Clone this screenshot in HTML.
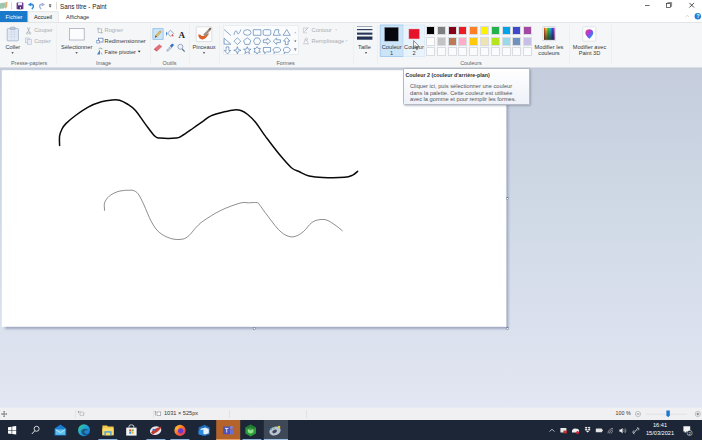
<!DOCTYPE html>
<html lang="fr">
<head>
<meta charset="utf-8">
<title>Sans titre - Paint</title>
<style>
html,body{margin:0;padding:0;}
body{width:702px;height:440px;overflow:hidden;position:relative;background:#d7dfeb linear-gradient(#c5cddd 0%,#d0dae6 45%,#e3e6f3 100%) no-repeat 0 67px / 702px 341px;font-family:"Liberation Sans",sans-serif;font-size:5.65px;color:#3a3a3a;}
.abs{position:absolute;}
.t{position:absolute;white-space:nowrap;line-height:7px;height:7px;}
.c{text-align:center;}
.dis{color:#a9adb3;}
#titlebar{left:0;top:0;width:702px;height:22px;background:#fff;}
#ribbon{left:0;top:22px;width:702px;height:45px;background:#f5f6f7;border-top:1px solid #e3e5e8;box-sizing:border-box;}
#ribbonedge{left:0;top:66px;width:702px;height:4px;background:linear-gradient(#f5f6f7 0%,#f5f6f7 28%,#c2c9d6 46%,#c6cedc 100%);}
.sep{position:absolute;top:25px;width:1px;height:39px;background:#eeeff1;}
.glabel{position:absolute;top:59.5px;white-space:nowrap;line-height:7px;color:#61656b;font-size:5.4px;}
#canvas{left:2px;top:70px;width:505px;height:257px;background:#fff;box-shadow:2px 2px 2px rgba(120,135,165,.55);}
#status{left:0;top:408px;width:702px;height:12px;background:#f0f0f2;box-shadow:0 -1px 0 #e8eaf3;}
#taskbar{left:0;top:420px;width:702px;height:20px;background:#1c2636;}
.ssep{position:absolute;top:2px;width:1px;height:8px;background:#e1e3e7;}
.sw{position:absolute;width:9px;height:9px;box-sizing:border-box;border:1px solid #d9dce0;}
.tip{left:402.5px;top:67.8px;width:127px;height:37px;box-sizing:border-box;background:linear-gradient(#ffffff,#eef1f8);border:1px solid #b4b9c4;border-radius:1.5px;box-shadow:1px 1px 2px rgba(90,100,120,.4);}
</style>
</head>
<body>

<!-- ======= title bar + tabs ======= -->
<div id="titlebar" class="abs"></div>
<div class="t" style="left:60px;top:2.5px;font-size:6.3px;color:#222;">Sans titre - Paint</div>
<svg class="abs" style="left:0;top:0" width="702" height="22" viewBox="0 0 702 22">
  <!-- app icon (cut off at left) -->
  <path d="M0 3.2 L4.5 2.6 L6 5.5 L4 8.6 L0 8.8Z" fill="#9fc7b0"/>
  <path d="M5.2 2.2 L7.6 1.8 L7.2 6.5 L6 8.6 L5 8.2Z" fill="#e4b27a"/>
  <rect x="11.3" y="2" width="0.7" height="7.5" fill="#c9c9c9"/>
  <!-- save -->
  <rect x="16.6" y="2.6" width="6.8" height="6.6" rx="0.5" fill="#6a3f8f"/>
  <rect x="18" y="2.6" width="4" height="2.6" fill="#efe6f6"/>
  <rect x="18.2" y="6.4" width="3.6" height="2.8" fill="#3f2460"/>
  <rect x="19.8" y="6.9" width="1.2" height="1.8" fill="#e9def3"/>
  <!-- undo -->
  <path d="M30.4 4.4 C33.2 3.6 34.6 6.4 32.2 8.6" fill="none" stroke="#2b8ad8" stroke-width="1.5" stroke-linecap="round"/>
  <path d="M27.8 4.8 L31.2 2.4 L31.4 6.6Z" fill="#2b8ad8"/>
  <!-- redo -->
  <path d="M42.6 4.4 C39.8 3.6 38.4 6.4 40.8 8.6" fill="none" stroke="#a9b6d2" stroke-width="1.5" stroke-linecap="round"/>
  <path d="M45.2 4.8 L41.8 2.4 L41.6 6.6Z" fill="#a9b6d2"/>
  <!-- dropdown -->
  <rect x="48.9" y="4" width="2.4" height="0.6" fill="#444"/>
  <path d="M48.8 5.4 L51.4 5.4 L50.1 7.4Z" fill="#333"/>
  <rect x="56.3" y="2" width="0.7" height="7.5" fill="#c9c9c9"/>
  <!-- window controls -->
  <rect x="645" y="5" width="4.6" height="0.7" fill="#333"/>
  <rect x="666.6" y="3.6" width="3.8" height="3.8" fill="none" stroke="#333" stroke-width="0.7"/>
  <path d="M667.8 3.4 V2.6 H671.6 V6.4 H670.8" fill="none" stroke="#333" stroke-width="0.6"/>
  <path d="M689.4 2.9 L694 7.5 M694 2.9 L689.4 7.5" stroke="#222" stroke-width="0.8" fill="none"/>
  <!-- tabs -->
  <rect x="0" y="11" width="27.6" height="11" fill="#1979ca"/>
  <path d="M28.3 22 V11.6 H58.3 V22" fill="#f5f6f7" stroke="#dadbdc" stroke-width="0.6"/>
  <!-- collapse + help -->
  <path d="M685.8 17 L687.4 15.2 L689 17" fill="none" stroke="#c4c4c4" stroke-width="0.6"/>
  <circle cx="697.8" cy="16.2" r="3.2" fill="#1f7fd6"/>
</svg>
<div class="t" style="left:5.6px;top:13.6px;font-size:5.6px;color:#fff;">Fichier</div>
<div class="t" style="left:34px;top:13.6px;font-size:5.6px;color:#222;">Accueil</div>
<div class="t" style="left:66px;top:13.6px;font-size:5.6px;color:#333;">Affichage</div>
<div class="t" style="left:696.6px;top:12.9px;font-size:5px;color:#fff;font-weight:bold;">?</div>

<!-- ======= ribbon ======= -->
<div id="ribbon" class="abs"></div>
<div id="ribbonedge" class="abs"></div>
<!-- group separators -->
<div class="sep" style="left:55.5px"></div>
<div class="sep" style="left:149.5px"></div>
<div class="sep" style="left:189px"></div>
<div class="sep" style="left:218.5px"></div>
<div class="sep" style="left:352.5px"></div>
<div class="sep" style="left:376.5px"></div>
<div class="sep" style="left:568.5px"></div>
<div class="sep" style="left:611px"></div>

<!-- Presse-papiers -->
<svg class="abs" style="left:0;top:22px" width="702" height="45" viewBox="0 22 702 45">
  <!-- coller icon -->
  <rect x="7.2" y="28.6" width="11.2" height="12.2" rx="0.6" fill="#e4ebf5" stroke="#9fb1cd" stroke-width="0.8"/>
  <rect x="10.4" y="27.2" width="4.8" height="2.4" rx="0.5" fill="#bfc9da" stroke="#8796b0" stroke-width="0.5"/>
  <path d="M8.6 32 H17 M8.6 34.4 H17 M8.6 36.8 H17 M11.4 30.2 V40 M14.4 30.2 V40" stroke="#c6d2e6" stroke-width="0.5"/>
  <path d="M11.4 52.2 H13.8 L12.6 53.8Z" fill="#333"/>
  <!-- couper icon -->
  <path d="M27.4 27.4 L29.8 33 M29.8 27.4 L27.4 33" stroke="#a7adb8" stroke-width="0.8" fill="none"/>
  <circle cx="27.2" cy="33.4" r="0.9" fill="none" stroke="#a7adb8" stroke-width="0.6"/>
  <circle cx="30" cy="33.4" r="0.9" fill="none" stroke="#a7adb8" stroke-width="0.6"/>
  <!-- copier icon -->
  <rect x="25.6" y="38" width="3.8" height="4.8" fill="#e9eef6" stroke="#b3bdd0" stroke-width="0.6"/>
  <rect x="27.6" y="39.6" width="3.8" height="4.8" fill="#e9eef6" stroke="#b3bdd0" stroke-width="0.6"/>
  <!-- selectionner icon -->
  <rect x="69.6" y="28.6" width="14.6" height="11.4" fill="#fbfcfe" stroke="#9aa3b4" stroke-width="0.7"/>
  <path d="M75.4 52.2 H77.8 L76.6 53.8Z" fill="#333"/>
  <!-- rogner icon -->
  <path d="M98.2 27.6 V32.6 H102.8 M97 28.8 H101.6 V33.6" stroke="#a7adb8" stroke-width="0.7" fill="none"/>
  <!-- redimensionner icon -->
  <rect x="98.4" y="38.2" width="4.6" height="3.8" fill="#fff" stroke="#4f78b8" stroke-width="0.7"/>
  <rect x="96.8" y="40.6" width="2.6" height="2.4" fill="#fff" stroke="#4f78b8" stroke-width="0.6"/>
  <!-- faire pivoter icon -->
  <path d="M97 54.6 L100 49.6 L100 54.6Z" fill="#4f86c6"/>
  <path d="M100.8 54.6 L103 54.6 L100.8 51Z" fill="#b9c8de"/>
  <path d="M98.6 49 C100 47.6 101.8 48 102.6 49.4" stroke="#3a8a5a" stroke-width="0.6" fill="none"/>
  <path d="M137.9 50.8 H140.5 L139.2 52.5Z" fill="#222"/>

  <!-- outils -->
  <rect x="152.9" y="28.7" width="10.2" height="10.6" fill="#cce4f7" stroke="#7fb4e4" stroke-width="0.7"/>
  <path d="M155 37.6 L155.6 35.6 L160 30.6 L161.4 31.8 L157 36.8Z" fill="#e8c15a" stroke="#8a7a4a" stroke-width="0.4"/>
  <path d="M155 37.6 L155.6 35.6 L157 36.8Z" fill="#444"/>
  <!-- fill bucket -->
  <path d="M167.6 33 L170.6 30.2 L173.6 33.4 L170.4 36.4Z" fill="#eef2f8" stroke="#6f7f9a" stroke-width="0.6"/>
  <path d="M166.6 31.6 C165.6 33 165.8 35 166.8 35.8 C167.4 34.6 167.4 33 166.6 31.6Z" fill="#3d8fd8"/>
  <path d="M172.6 34 L173.8 36 L171.8 36.6Z" fill="#d0503a"/>
  <!-- eraser -->
  <path d="M154.6 48.6 L159.2 44.6 L162 46.6 L157.4 50.8Z" fill="#e0707a" stroke="#c45a66" stroke-width="0.3"/>
  <path d="M154.6 48.6 L157.4 50.8 L156.8 51.6 L154 49.4Z" fill="#b9485a"/>
  <!-- picker -->
  <path d="M166.8 51.2 L167.4 49.4 L170.4 46.2 L171.8 47.4 L168.8 50.6Z" fill="#cfd6e4" stroke="#5c6d8e" stroke-width="0.4"/>
  <path d="M170 45.8 L172 43.8 C173 43.2 174.2 44.4 173.6 45.4 L171.8 47.6Z" fill="#2f6fc0"/>
  <!-- magnifier -->
  <circle cx="180.4" cy="46.8" r="2.5" fill="#eaf2fb" stroke="#7a8aa6" stroke-width="0.7"/>
  <path d="M182.2 48.8 L184.6 51.6" stroke="#5a6a86" stroke-width="1.1"/>

  <!-- pinceaux -->
  <rect x="196.2" y="26.8" width="15.6" height="14.8" rx="0.8" fill="#fdfdfd" stroke="#c9ccd2" stroke-width="0.6"/>
  <path d="M198.4 34.6 C198 38.6 201.4 40.4 204.6 38.8 C207.4 37.4 207.2 35.2 209.6 33.6 C206.6 33.6 205.4 35.6 203.4 36 C201 36.4 200.6 33.6 198.4 34.6Z" fill="#d9622b"/>
  <path d="M203.2 34.6 L209.2 28.4 L210.8 29.8 L205.2 36.4Z" fill="#9c8f84"/>
  <path d="M208.4 29.2 L210.2 27.6 L211.4 28.8 L210 30.6Z" fill="#6d5f57"/>
  <path d="M202.8 52.2 H205.2 L204 53.8Z" fill="#333"/>
</svg>
<div class="t c" style="left:0px;width:25.6px;top:43.8px;">Coller</div>
<div class="t dis" style="left:34.2px;top:26.6px;">Couper</div>
<div class="t dis" style="left:34.2px;top:37.6px;">Copier</div>
<div class="glabel" style="left:11px;">Presse-papiers</div>
<div class="t c" style="left:56.6px;width:40px;top:43.8px;">Sélectionner</div>
<div class="t dis" style="left:104.6px;top:26.6px;">Rogner</div>
<div class="t" style="left:104.6px;top:37.6px;">Redimensionner</div>
<div class="t" style="left:104.6px;top:48.6px;">Faire pivoter</div>
<div class="glabel" style="left:96px;">Image</div>
<div class="t" style="left:178.6px;top:31px;font-family:'Liberation Serif',serif;font-weight:bold;font-size:9px;color:#222;line-height:9px;height:9px;">A</div>
<div class="glabel" style="left:162.6px;">Outils</div>
<div class="t c" style="left:189px;width:30px;top:43.8px;">Pinceaux</div>

<!-- Formes -->
<div class="abs" style="left:222.7px;top:24.6px;width:76.6px;height:30.8px;background:#fafbfd;border:1px solid #eaedf1;box-sizing:border-box;"></div>
<svg class="abs" style="left:0;top:22px" width="702" height="45" viewBox="0 22 702 45">
<path transform="translate(227.50 32.50)" d="M-3.4 -3 L3.4 3" fill="none" stroke="#3f70a8" stroke-width="0.6" stroke-linejoin="round"/>
<path transform="translate(237.37 32.50)" d="M-3.4 2.6 C-2.4 -3 -0.6 -2.6 -0.2 0.4 C0.2 2.6 2.4 1 3.4 -3" fill="none" stroke="#3f70a8" stroke-width="0.6" stroke-linejoin="round"/>
<ellipse cx="247.24" cy="32.5" rx="3.8" ry="2.8" fill="none" stroke="#3f70a8" stroke-width="0.6" stroke-linejoin="round"/>
<rect x="253.31" y="29.7" width="7.6" height="5.6" fill="none" stroke="#3f70a8" stroke-width="0.6" stroke-linejoin="round"/>
<rect x="263.18" y="29.7" width="7.6" height="5.6" rx="1.4" fill="none" stroke="#3f70a8" stroke-width="0.6" stroke-linejoin="round"/>
<path transform="translate(276.85 32.50)" d="M-3.6 2.8 L-1.6 -2.8 L2 -2.8 L1.6 0.4 L3.8 2.8Z" fill="none" stroke="#3f70a8" stroke-width="0.6" stroke-linejoin="round"/>
<path transform="translate(286.72 32.50)" d="M-3.6 2.8 L0 -3 L3.6 2.8Z" fill="none" stroke="#3f70a8" stroke-width="0.6" stroke-linejoin="round"/>
<path transform="translate(227.50 41.20)" d="M-3.4 3 L-3.4 -3 L3.4 3Z" fill="none" stroke="#3f70a8" stroke-width="0.6" stroke-linejoin="round"/>
<path transform="translate(237.37 41.20)" d="M0 -3.4 L3.4 0 L0 3.4 L-3.4 0Z" fill="none" stroke="#3f70a8" stroke-width="0.6" stroke-linejoin="round"/>
<path transform="translate(247.24 41.20)" d="M0 -3.4 L3.6 -0.6 L2.2 3.2 L-2.2 3.2 L-3.6 -0.6Z" fill="none" stroke="#3f70a8" stroke-width="0.6" stroke-linejoin="round"/>
<path transform="translate(257.11 41.20)" d="M-1.8 -3.2 L1.8 -3.2 L3.6 0 L1.8 3.2 L-1.8 3.2 L-3.6 0Z" fill="none" stroke="#3f70a8" stroke-width="0.6" stroke-linejoin="round"/>
<path transform="translate(266.98 41.20)" d="M-3.6 -1.4 L0.2 -1.4 L0.2 -3.2 L3.6 0 L0.2 3.2 L0.2 1.4 L-3.6 1.4Z" fill="none" stroke="#3f70a8" stroke-width="0.6" stroke-linejoin="round"/>
<path transform="translate(276.85 41.20)" d="M3.6 -1.4 L-0.2 -1.4 L-0.2 -3.2 L-3.6 0 L-0.2 3.2 L-0.2 1.4 L3.6 1.4Z" fill="none" stroke="#3f70a8" stroke-width="0.6" stroke-linejoin="round"/>
<path transform="translate(286.72 41.20)" d="M-1.4 3.4 L-1.4 -0.2 L-3.2 -0.2 L0 -3.6 L3.2 -0.2 L1.4 -0.2 L1.4 3.4Z" fill="none" stroke="#3f70a8" stroke-width="0.6" stroke-linejoin="round"/>
<path transform="translate(227.50 50.30)" d="M-1.4 -3.4 L-1.4 0.2 L-3.2 0.2 L0 3.6 L3.2 0.2 L1.4 0.2 L1.4 -3.4Z" fill="none" stroke="#3f70a8" stroke-width="0.6" stroke-linejoin="round"/>
<path transform="translate(237.37 50.30)" d="M0 -3.6 L0.9 -0.9 L3.6 0 L0.9 0.9 L0 3.6 L-0.9 0.9 L-3.6 0 L-0.9 -0.9Z" fill="none" stroke="#3f70a8" stroke-width="0.6" stroke-linejoin="round"/>
<path transform="translate(247.24 50.30)" d="M0 -3.6 L1 -1.1 L3.7 -1.1 L1.6 0.6 L2.4 3.3 L0 1.7 L-2.4 3.3 L-1.6 0.6 L-3.7 -1.1 L-1 -1.1Z" fill="none" stroke="#3f70a8" stroke-width="0.6" stroke-linejoin="round"/>
<path transform="translate(257.11 50.30)" d="M0 -3.7 L1.1 -1.9 L3.2 -1.9 L2.2 0 L3.2 1.9 L1.1 1.9 L0 3.7 L-1.1 1.9 L-3.2 1.9 L-2.2 0 L-3.2 -1.9 L-1.1 -1.9Z" fill="none" stroke="#3f70a8" stroke-width="0.6" stroke-linejoin="round"/>
<path transform="translate(266.98 50.30)" d="M-3.6 -2.8 H3.6 V1.6 H-0.6 L-2.2 3.4 L-2.2 1.6 H-3.6Z" fill="none" stroke="#3f70a8" stroke-width="0.6" stroke-linejoin="round"/>
<path transform="translate(276.85 50.30)" d="M0 -2.8 C2.2 -2.8 3.8 -1.8 3.8 -0.4 C3.8 1 2.2 2 0 2 C-0.6 2 -1 1.9 -1.4 1.8 L-3 3.2 L-2.6 1.2 C-3.4 0.8 -3.8 0.2 -3.8 -0.4 C-3.8 -1.8 -2.2 -2.8 0 -2.8Z" fill="none" stroke="#3f70a8" stroke-width="0.6" stroke-linejoin="round"/>
<path transform="translate(286.72 50.30)" d="M-2 -2.6 C-0.8 -3.4 1.4 -3.2 2.4 -2.2 C3.8 -1.6 3.8 0.2 2.8 1 C2.2 2.4 0.2 2.6 -0.8 2 L-2.8 3.2 L-2.2 1.6 C-3.8 0.8 -3.8 -1.6 -2 -2.6Z" fill="none" stroke="#3f70a8" stroke-width="0.6" stroke-linejoin="round"/>
  <path d="M294.2 33.2 H296.4 L295.3 31.8Z" fill="#b4b8be"/>
  <path d="M294.2 40.6 H296.4 L295.3 42Z" fill="#444"/>
  <rect x="294.2" y="48.2" width="2.2" height="0.5" fill="#444"/>
  <path d="M294.2 49.4 H296.4 L295.3 50.8Z" fill="#444"/>
  <!-- contour icon -->
  <path d="M303.4 28 H307.4 M303.4 28 V32.8 H307" stroke="#b4bac6" stroke-width="0.6" fill="none"/>
  <path d="M304.6 31.6 L308.4 27.4" stroke="#b4bac6" stroke-width="0.9" fill="none"/>
  <path d="M335.2 29.4 H337.2 L336.2 30.6Z" fill="#b4b8be"/>
  <!-- remplissage icon -->
  <path d="M303 43.8 H309 M304 42.6 L305.4 39.2 L307.2 41 L308 42.6" stroke="#b4bac6" stroke-width="0.7" fill="none"/>
  <circle cx="306.4" cy="39.2" r="1.2" fill="none" stroke="#b4bac6" stroke-width="0.6"/>
  <path d="M345.6 40.4 H347.6 L346.6 41.6Z" fill="#b4b8be"/>
  <!-- taille -->
  <rect x="357" y="26.2" width="15.4" height="0.7" fill="#7d8799"/>
  <rect x="357" y="29" width="15.4" height="1.2" fill="#2f4060"/>
  <rect x="357" y="32.6" width="15.4" height="2.1" fill="#273858"/>
  <rect x="357" y="36.5" width="15.4" height="3.2" fill="#1f3050"/>
  <path d="M364.8 52.2 H367.2 L366 53.8Z" fill="#333"/>
  <!-- couleur 1 / 2 -->
  <rect x="380.2" y="25" width="23" height="31.4" fill="#cce4f7" stroke="#92c0e8" stroke-width="0.7"/>
  <rect x="403.2" y="25" width="21.6" height="31.4" fill="#e9f3fc" stroke="#cfe3f6" stroke-width="0.6"/>
  <rect x="384.6" y="27.3" width="13.8" height="13.8" fill="#05070c" stroke="#8f99aa" stroke-width="0.4"/>
  <rect x="408.9" y="29" width="10.5" height="9.9" fill="#e5142a" stroke="#e9a0a8" stroke-width="0.4"/>
  <!-- cursor -->
  <path d="M413.6 40.6 V48.6 L415.4 46.9 L416.7 49.8 L417.7 49.3 L416.5 46.5 L419 46.3Z" fill="#fff" stroke="#222" stroke-width="0.5" stroke-linejoin="round"/>
  <!-- modifier les couleurs -->
  <defs>
    <linearGradient id="rb" x1="0" x2="1" y1="0" y2="0">
      <stop offset="0" stop-color="#e63a2e"/><stop offset="0.2" stop-color="#f0d23a"/><stop offset="0.4" stop-color="#3cc24a"/><stop offset="0.6" stop-color="#2fb6e0"/><stop offset="0.8" stop-color="#3a4fd0"/><stop offset="1" stop-color="#c03ac8"/>
    </linearGradient>
    <linearGradient id="dk" x1="0" x2="0" y1="0" y2="1">
      <stop offset="0" stop-color="#000" stop-opacity="0"/><stop offset="1" stop-color="#222" stop-opacity="0.75"/>
    </linearGradient>
    <linearGradient id="p3" x1="0" x2="1" y1="0" y2="1">
      <stop offset="0" stop-color="#f03a7a"/><stop offset="0.45" stop-color="#a040e0"/><stop offset="0.75" stop-color="#2a8af0"/><stop offset="1" stop-color="#20c0e0"/>
    </linearGradient>
  </defs>
  <rect x="543" y="26.8" width="12.6" height="14" fill="#fff" stroke="#b9bec8" stroke-width="0.5"/>
  <rect x="544" y="27.8" width="10.6" height="12" fill="url(#rb)"/>
  <rect x="544" y="27.8" width="10.6" height="12" fill="url(#dk)"/>
  <!-- paint 3d -->
  <rect x="582.8" y="26.8" width="13" height="14.4" rx="0.8" fill="#fdfdfd" stroke="#d2d5da" stroke-width="0.6"/>
  <path d="M589.3 38.8 C585.6 35.4 585 33.4 585.6 31.4 C586.6 28.6 592 28.6 593 31.4 C593.6 33.4 593 35.4 589.3 38.8Z" fill="url(#p3)"/>
</svg>
<div class="t dis" style="left:311.6px;top:26.6px;">Contour</div>
<div class="t dis" style="left:311.6px;top:37.6px;">Remplissage</div>
<div class="glabel" style="left:276.4px;">Formes</div>
<div class="t c" style="left:352.5px;width:24px;top:43.8px;">Taille</div>
<div class="t c" style="left:380.2px;width:23px;top:43.9px;">Couleur</div>
<div class="t c" style="left:380.2px;width:23px;top:49.6px;">1</div>
<div class="t c" style="left:403.2px;width:21.6px;top:43.9px;">Couleur</div>
<div class="t c" style="left:403.2px;width:21.6px;top:49.6px;">2</div>
<div class="sw" style="left:426.20px;top:26px;background:#000000;"></div>
<div class="sw" style="left:426.20px;top:36.6px;background:#ffffff;"></div>
<div class="sw" style="left:426.20px;top:47.3px;background:#fafbfc;"></div>
<div class="sw" style="left:436.96px;top:26px;background:#7f7f7f;"></div>
<div class="sw" style="left:436.96px;top:36.6px;background:#c3c3c3;"></div>
<div class="sw" style="left:436.96px;top:47.3px;background:#fafbfc;"></div>
<div class="sw" style="left:447.72px;top:26px;background:#880015;"></div>
<div class="sw" style="left:447.72px;top:36.6px;background:#b97a57;"></div>
<div class="sw" style="left:447.72px;top:47.3px;background:#fafbfc;"></div>
<div class="sw" style="left:458.48px;top:26px;background:#ed1c24;"></div>
<div class="sw" style="left:458.48px;top:36.6px;background:#ffaec9;"></div>
<div class="sw" style="left:458.48px;top:47.3px;background:#fafbfc;"></div>
<div class="sw" style="left:469.24px;top:26px;background:#ff7f27;"></div>
<div class="sw" style="left:469.24px;top:36.6px;background:#ffc90e;"></div>
<div class="sw" style="left:469.24px;top:47.3px;background:#fafbfc;"></div>
<div class="sw" style="left:480.00px;top:26px;background:#fff200;"></div>
<div class="sw" style="left:480.00px;top:36.6px;background:#efe4b0;"></div>
<div class="sw" style="left:480.00px;top:47.3px;background:#fafbfc;"></div>
<div class="sw" style="left:490.76px;top:26px;background:#22b14c;"></div>
<div class="sw" style="left:490.76px;top:36.6px;background:#b5e61d;"></div>
<div class="sw" style="left:490.76px;top:47.3px;background:#fafbfc;"></div>
<div class="sw" style="left:501.52px;top:26px;background:#00a2e8;"></div>
<div class="sw" style="left:501.52px;top:36.6px;background:#99d9ea;"></div>
<div class="sw" style="left:501.52px;top:47.3px;background:#fafbfc;"></div>
<div class="sw" style="left:512.28px;top:26px;background:#3f48cc;"></div>
<div class="sw" style="left:512.28px;top:36.6px;background:#7092be;"></div>
<div class="sw" style="left:512.28px;top:47.3px;background:#fafbfc;"></div>
<div class="sw" style="left:523.04px;top:26px;background:#a349a4;"></div>
<div class="sw" style="left:523.04px;top:36.6px;background:#c8bfe7;"></div>
<div class="sw" style="left:523.04px;top:47.3px;background:#fafbfc;"></div>
<div class="glabel" style="left:460.2px;">Couleurs</div>
<div class="t c" style="left:529px;width:40px;top:43.8px;">Modifier les</div>
<div class="t c" style="left:529px;width:40px;top:49.9px;">couleurs</div>
<div class="t c" style="left:568.5px;width:42px;top:43.8px;">Modifier avec</div>
<div class="t c" style="left:568.5px;width:42px;top:49.9px;">Paint 3D</div>

<!-- ======= canvas ======= -->
<svg class="abs" style="left:0;top:67px" width="702" height="341" viewBox="0 67 702 341">
  <defs><filter id="sh" x="-5%" y="-5%" width="110%" height="110%"><feGaussianBlur stdDeviation="0.9"/></filter></defs>
  <rect x="5" y="73.4" width="503.4" height="255.6" fill="#97a3bd" opacity="0.9" filter="url(#sh)"/>
  <rect x="1.8" y="70.2" width="504.6" height="256.6" fill="#fff"/>
  <path d="M59.6 145.5 C59.6 143.9 59.2 138.7 59.6 135.9 C60.0 133.2 61.0 131.1 62.0 129.0 C63.0 127.0 63.7 125.8 65.9 123.6 C68.2 121.3 71.9 118.2 75.5 115.5 C79.1 112.8 83.4 109.6 87.7 107.3 C92.0 105.0 97.3 103.0 101.4 101.8 C105.5 100.6 109.3 100.2 112.3 99.9 C115.3 99.6 117.1 99.5 119.6 100.2 C122.1 100.9 124.6 102.3 127.3 104.0 C129.9 105.7 132.6 107.2 135.5 110.5 C138.4 113.8 141.8 119.4 145.0 123.6 C148.2 127.8 152.0 133.5 154.5 135.9 C157.0 138.3 156.3 137.7 160.0 138.1 C163.7 138.5 172.8 138.5 176.4 138.1 C180.0 137.7 179.1 137.5 181.8 135.9 C184.5 134.3 189.1 131.0 192.7 128.5 C196.3 126.0 200.6 123.0 203.6 120.9 C206.6 118.8 207.4 117.4 210.9 115.9 C214.4 114.4 220.6 112.8 224.5 111.8 C228.4 110.8 231.4 110.1 234.1 109.9 C236.8 109.7 238.6 109.7 240.9 110.5 C243.2 111.3 245.2 112.5 247.7 114.5 C250.2 116.5 252.9 119.0 255.9 122.7 C258.9 126.4 261.6 131.2 265.5 136.4 C269.4 141.6 274.8 148.9 279.1 154.1 C283.4 159.3 288.0 164.8 291.4 167.7 C294.8 170.6 296.6 170.4 299.5 171.8 C302.4 173.2 305.2 175.0 309.1 175.9 C313.0 176.8 316.8 177.3 322.7 177.5 C328.6 177.7 339.5 177.7 344.5 177.3 C349.5 176.9 350.5 176.1 352.7 175.1 C354.9 174.1 356.8 171.9 357.6 171.3" fill="none" stroke="#0a0a0a" stroke-width="1.5" stroke-linejoin="round" stroke-linecap="round"/>
  <path d="M104.6 210.4 C104.6 209.1 103.8 205.1 104.6 202.7 C105.4 200.3 107.2 198.0 109.2 196.2 C111.2 194.4 114.3 192.9 116.9 191.9 C119.5 190.9 122.6 190.7 124.6 190.4 C126.6 190.1 127.4 190.3 128.8 190.3 C130.2 190.3 131.6 189.8 133.1 190.4 C134.6 191.0 136.3 191.4 138.1 193.8 C139.9 196.2 141.6 199.9 143.8 204.6 C146.0 209.3 148.9 217.3 151.5 221.9 C154.1 226.5 156.0 229.5 159.2 232.3 C162.4 235.1 167.0 237.3 170.8 238.5 C174.7 239.7 179.2 239.7 182.3 239.2 C185.4 238.7 186.9 237.3 189.2 235.4 C191.4 233.5 193.4 230.1 195.8 227.7 C198.2 225.3 199.3 223.7 203.5 220.8 C207.7 217.9 214.7 213.4 220.8 210.4 C226.9 207.4 235.4 204.4 240.0 203.1 C244.6 201.8 245.7 202.9 248.6 202.8 C251.5 202.7 255.4 202.3 257.3 202.7 C259.2 203.1 258.7 203.8 260.0 205.4 C261.3 207.0 261.9 208.3 265.0 212.3 C268.1 216.3 274.6 225.6 278.5 229.6 C282.4 233.6 285.2 235.1 288.1 236.2 C291.0 237.3 293.2 237.0 295.8 236.2 C298.4 235.4 300.9 233.7 303.5 231.5 C306.1 229.3 308.8 225.0 311.2 223.1 C313.6 221.2 315.1 220.5 317.7 220.0 C320.2 219.5 323.4 219.0 326.5 220.0 C329.6 221.0 333.6 224.0 336.2 225.8 C338.8 227.6 341.3 230.0 342.3 230.8" fill="none" stroke="#505050" stroke-width="0.65" stroke-linejoin="round" stroke-linecap="round"/>
  <!-- resize handles -->
  <rect x="506.8" y="197.6" width="1.8" height="1.8" fill="#fff" stroke="#6b7688" stroke-width="0.5"/>
  <rect x="253.4" y="327.5" width="1.8" height="1.8" fill="#fff" stroke="#6b7688" stroke-width="0.5"/>
  <rect x="506.8" y="327.5" width="1.8" height="1.8" fill="#fff" stroke="#6b7688" stroke-width="0.5"/>
</svg>
<!-- tooltip -->
<div class="abs tip"></div>
<div class="t" style="left:405.4px;top:71.8px;font-weight:bold;font-size:5.35px;color:#333;">Couleur 2 (couleur d'arrière-plan)</div>
<div class="t" style="left:410px;top:83px;font-size:5.7px;color:#555;">Cliquer ici, puis sélectionner une couleur</div>
<div class="t" style="left:410px;top:89.5px;font-size:5.7px;color:#555;">dans la palette. Cette couleur est utilisée</div>
<div class="t" style="left:410px;top:95.9px;font-size:5.7px;color:#555;">avec la gomme et pour remplir les formes.</div>

<!-- ======= status bar ======= -->
<div id="status" class="abs">
  <div class="ssep" style="left:74.5px"></div>
  <div class="ssep" style="left:152.5px"></div>
  <div class="ssep" style="left:228.5px"></div>
  <div class="ssep" style="left:306px"></div>
  <svg class="abs" style="left:0;top:0" width="702" height="12" viewBox="0 408 702 12">
    <path d="M1.6 414 H6.6 M4.1 411.5 V416.5" stroke="#444" stroke-width="0.6" fill="none"/>
    <path d="M1.2 414 L2.2 413.2 V414.8Z M7 414 L6 413.2 V414.8Z M4.1 411.1 L3.3 412.1 H4.9Z M4.1 416.9 L3.3 415.9 H4.9Z" fill="#444"/>
    <rect x="80" y="412" width="3.8" height="3.4" fill="none" stroke="#6a7280" stroke-width="0.5" stroke-dasharray="0.8 0.4"/>
    <path d="M78.6 411.2 V413.4 M77.8 411.6 H79.4" stroke="#555" stroke-width="0.4"/>
    <rect x="157" y="412" width="3.8" height="3.4" fill="#fff" stroke="#6a7280" stroke-width="0.5"/>
    <path d="M155.4 411.4 V415.6 M154.6 412 L155.4 411.2 L156.2 412" stroke="#555" stroke-width="0.4" fill="none"/>
    <circle cx="638" cy="414" r="2.6" fill="#f7f7f7" stroke="#8a8f98" stroke-width="0.5"/>
    <rect x="636.6" y="413.7" width="2.8" height="0.6" fill="#444"/>
    <circle cx="697.8" cy="414" r="2.6" fill="#f7f7f7" stroke="#8a8f98" stroke-width="0.5"/>
    <path d="M696.4 414 H699.2 M697.8 412.6 V415.4" stroke="#444" stroke-width="0.6"/>
    <rect x="646" y="413.8" width="41" height="0.6" fill="#d4d7dc"/>
    <path d="M666.4 410.6 H669.8 V415.6 L668.1 417.2 L666.4 415.6Z" fill="#1b78d0"/>
  </svg>
  <div class="t" style="left:164px;top:1.6px;font-size:5.6px;color:#333;">1031 × 525px</div>
  <div class="t" style="left:615.6px;top:1.6px;font-size:5.3px;color:#333;">100 %</div>
</div>

<!-- ======= taskbar ======= -->
<div id="taskbar" class="abs">
  <svg class="abs" style="left:0;top:0" width="702" height="20" viewBox="0 420 702 20">
    <defs>
      <linearGradient id="ff" x1="0" x2="1" y1="0" y2="1"><stop offset="0" stop-color="#ffd23a"/><stop offset="0.5" stop-color="#ff6a2a"/><stop offset="1" stop-color="#d02a7a"/></linearGradient>
      <linearGradient id="ed" x1="0" x2="1" y1="0" y2="1"><stop offset="0" stop-color="#3ad07a"/><stop offset="0.5" stop-color="#1fa0e0"/><stop offset="1" stop-color="#1560c0"/></linearGradient>
    </defs>
    <!-- highlighted buttons -->
    <rect x="216.2" y="420" width="24" height="20" fill="#b4632a"/>
    <rect x="263.8" y="420" width="24.2" height="20" fill="#3f4856"/>
    <!-- underlines -->
    <rect x="98.4" y="439" width="19" height="1" fill="#8fb2d8"/>
    <rect x="146.4" y="439" width="19" height="1" fill="#8fb2d8"/>
    <rect x="170.4" y="439" width="19" height="1" fill="#8fb2d8"/>
    <rect x="216.2" y="439" width="24" height="1" fill="#e6a06a"/>
    <rect x="242.4" y="439" width="19" height="1" fill="#8fb2d8"/>
    <rect x="263.8" y="439" width="24.2" height="1" fill="#9fc2e8"/>
    <!-- windows -->
    <path d="M8 427.2 L11.6 426.7 V430 H8Z M12.2 426.6 L16.2 426 V430 H12.2Z M8 430.6 H11.6 V433.9 L8 433.4Z M12.2 430.6 H16.2 V434.6 L12.2 434Z" fill="#fff"/>
    <!-- search -->
    <circle cx="36.6" cy="428.8" r="2.5" fill="none" stroke="#fff" stroke-width="0.8"/>
    <path d="M34.8 430.8 L31.8 434" stroke="#fff" stroke-width="0.9"/>
    <!-- mail -->
    <path d="M54.6 428.6 L60.4 424.6 L66.2 428.6 V435.6 H54.6Z" fill="#1a7fd0"/>
    <path d="M55.6 429.4 H65.2 V434.8 H55.6Z" fill="#5cc0f0"/>
    <path d="M55.6 429.6 L60.4 432.6 L65.2 429.6" fill="none" stroke="#e9f6ff" stroke-width="0.7"/>
    <!-- edge -->
    <circle cx="84" cy="430.2" r="6" fill="url(#ed)"/>
    <path d="M81.2 431.4 C81.2 428.4 86.8 427.6 88.4 430.6 C86.6 429.8 84.2 430.6 84.6 432.6 C85 434.2 87.4 434.6 88.8 433.6 C87.4 436.2 81.2 435.6 81.2 431.4Z" fill="#1b2434" opacity="0.55"/>
    <!-- explorer -->
    <path d="M102.4 425.4 H107 L108 426.6 H113.6 V435.2 H102.4Z" fill="#f6c84a"/>
    <rect x="102.4" y="428.2" width="11.2" height="7" fill="#fbdc6a"/>
    <rect x="104.4" y="431.2" width="7.2" height="4" fill="#4a9fe0"/>
    <rect x="105.8" y="432.6" width="4.4" height="2.6" fill="#fbdc6a"/>
    <!-- store -->
    <path d="M126.2 427.6 H136.6 V435.6 H126.2Z" fill="#f4f4f4"/>
    <path d="M129 427.6 V425.8 C129 424.6 133.8 424.6 133.8 425.8 V427.6" fill="none" stroke="#f4f4f4" stroke-width="0.8"/>
    <rect x="129.2" y="429.4" width="2" height="2" fill="#e8482e"/><rect x="131.6" y="429.4" width="2" height="2" fill="#7ab82e"/>
    <rect x="129.2" y="431.8" width="2" height="2" fill="#2e9ae8"/><rect x="131.6" y="431.8" width="2" height="2" fill="#f4b82e"/>
    <!-- paint-ish -->
    <ellipse cx="155.6" cy="430.6" rx="5.8" ry="4.2" fill="#e9e4ee" transform="rotate(-15 155.6 430.6)"/>
    <path d="M151 432.6 C153 429 157 427.4 161.6 426.4 C160.6 429.4 157 432.6 152.4 434.2Z" fill="#c0392b"/>
    <circle cx="153.6" cy="430" r="1.2" fill="#3a6fd0"/>
    <!-- firefox -->
    <circle cx="180" cy="430.4" r="5.6" fill="url(#ff)"/>
    <circle cx="180.6" cy="430.8" r="2.6" fill="#6a3ad0"/>
    <path d="M175.4 427.4 C177 426.4 178.6 426.8 179.6 428.2 C178 428.2 177 429.2 177.4 430.6 C176.2 430 175.4 428.8 175.4 427.4Z" fill="#ffb02a"/>
    <!-- outlook-ish -->
    <path d="M198.6 427.4 L204.6 424.8 L209.8 427.4 V434.2 L204.6 436 L198.6 434.2Z" fill="#1f6fc0"/>
    <path d="M200.6 428.8 L205.4 427.4 L208.8 429 V433.2 L205 434.4 L200.6 433Z" fill="#e6f0fa"/>
    <path d="M198.6 430.6 L203.4 429.6 V435.6 L198.6 434.2Z" fill="#2a8ae0"/>
    <!-- teams -->
    <rect x="223" y="426.4" width="7.4" height="7.8" rx="1" fill="#4f52b8"/>
    <circle cx="231.4" cy="427.4" r="1.6" fill="#7b80e8"/>
    <path d="M230 429.4 H233.8 V433 C233.8 434.6 231.6 435 230 434.2Z" fill="#6a6fd8"/>
    <path d="M225 428.4 H228.4 M226.7 428.4 V432.6" stroke="#fff" stroke-width="0.8"/>
    <!-- green -->
    <path d="M250.6 424.6 L256 427.6 V433.4 L250.6 436.4 L245.4 433.4 V427.6Z" fill="#2a9a3a"/>
    <path d="M250.6 427.6 L253.4 429.2 V432.2 L250.6 433.8 L247.8 432.2 V429.2Z" fill="#8fe08a"/>
    <path d="M250.6 424.6 L256 427.6 L250.6 430.6 L245.4 427.6Z" fill="#1a6a2a" opacity="0.6"/>
    <!-- paint active -->
    <ellipse cx="275" cy="431" rx="5.8" ry="4.2" fill="#b9c4d2" transform="rotate(-20 275 431)"/>
    <ellipse cx="274.6" cy="431.4" rx="2.4" ry="1.6" fill="#3f4856" transform="rotate(-20 274.6 431.4)"/>
    <circle cx="279" cy="427" r="1.3" fill="#e8c84a"/>
    <circle cx="271.2" cy="429" r="0.9" fill="#4aa0e0"/><circle cx="273.8" cy="427.8" r="0.9" fill="#5ac06a"/>
    <!-- tray -->
    <path d="M549.6 431.6 L552 429.2 L554.4 431.6" fill="none" stroke="#fff" stroke-width="0.7"/>
    <rect x="560.4" y="428" width="6" height="4.6" rx="0.6" fill="#e8e8e8"/><rect x="563.4" y="430.6" width="3.4" height="2.8" fill="#c8302a"/>
    <path d="M572 432.6 C571.4 429.6 574 428 576 428.8 C578.6 428 580 431 578.6 432.6Z" fill="#ececec"/><circle cx="577.6" cy="432.6" r="1.5" fill="#d8203a"/>
    <path d="M586.1 426.8 L587.6 427.8 L586.1 428.8 L584.6 427.8Z M589.1 426.8 L590.6 427.8 L589.1 428.8 L587.6 427.8Z M586.1 428.8 L587.6 429.8 L586.1 430.8 L584.6 429.8Z M589.1 428.8 L590.6 429.8 L589.1 430.8 L587.6 429.8Z M587.6 430.4 L589.1 431.4 L587.6 432.4 L586.1 431.4Z" fill="#f4f4f4"/>
    <rect x="595.8" y="428.6" width="6.2" height="3.6" rx="0.5" fill="#e4e4e4"/><rect x="602" y="429.6" width="0.8" height="1.6" fill="#e4e4e4"/>
    <path d="M608 433.4 C608 430.6 610.2 428.4 613 428.4 M609.6 433.4 C609.6 431.4 611 430 613 430 M611.2 433.4 C611.2 432.4 612 431.6 613 431.6" fill="none" stroke="#cfcfcf" stroke-width="0.6"/>
    <path d="M619.4 429.6 H620.8 L622.6 428 V433.4 L620.8 431.8 H619.4Z" fill="#eee"/>
    <path d="M623.6 429.4 C624.4 430.2 624.4 431.2 623.6 432 M624.8 428.4 C626.2 429.8 626.2 431.6 624.8 433" fill="none" stroke="#eee" stroke-width="0.5"/>
    <path d="M633.6 433.4 L637.6 428.4 M634 430.4 C632.6 431.4 632.6 433.4 634.4 433.8 M637.2 427.8 C638.8 427.4 639.4 429.4 638 430.4" fill="none" stroke="#e8e8e8" stroke-width="0.8"/>
    <!-- notification -->
    <path d="M683.4 426.2 H690.2 V431.6 H686.4 L684.8 433.2 V431.6 H683.4Z" fill="#f4f4f4"/>
    <circle cx="689.6" cy="433" r="2.6" fill="#1c2636" stroke="#f4f4f4" stroke-width="0.5"/>
  </svg>
  <div class="t c" style="left:645px;width:30px;top:1.8px;font-size:5.6px;color:#fff;">16:41</div>
  <div class="t c" style="left:645px;width:30px;top:10.2px;font-size:5.6px;color:#fff;">15/03/2021</div>
  <div class="t c" style="left:687.6px;width:4px;top:9.8px;font-size:4px;color:#fff;">2</div>
</div>

</body>
</html>
